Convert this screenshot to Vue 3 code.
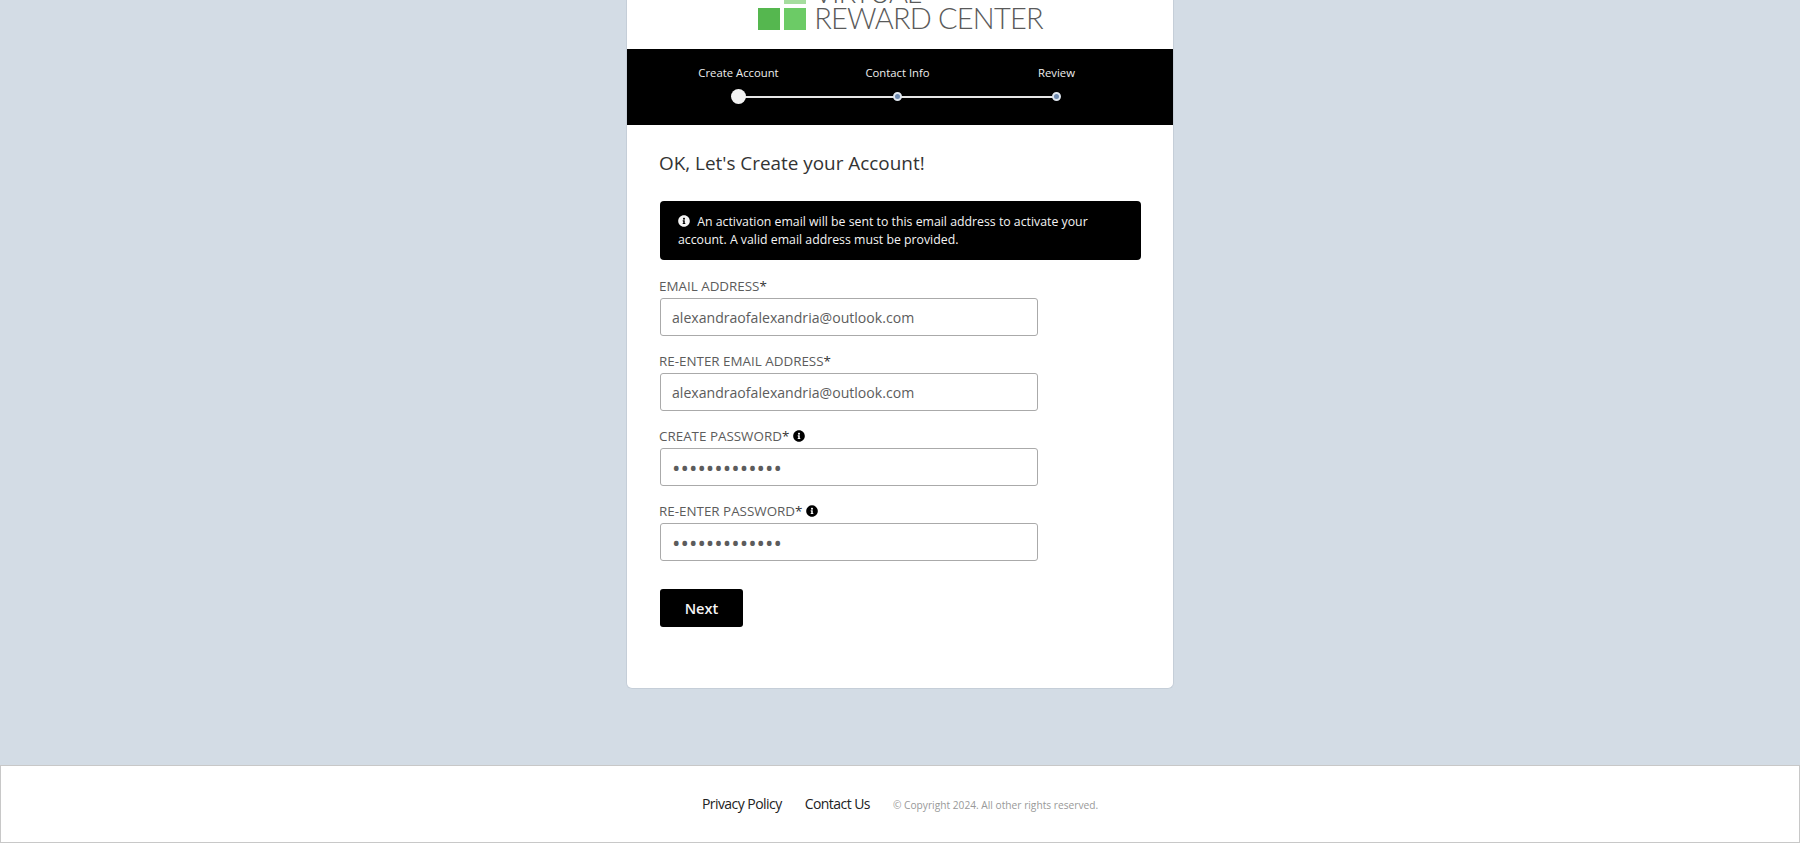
<script setup>
const steps = [
  { label: 'Create Account', active: true },
  { label: 'Contact Info', active: false },
  { label: 'Review', active: false }
]

const fields = [
  { label: 'EMAIL ADDRESS', type: 'text', value: 'alexandraofalexandria@outlook.com', info: false },
  { label: 'RE-ENTER EMAIL ADDRESS', type: 'text', value: 'alexandraofalexandria@outlook.com', info: false },
  { label: 'CREATE PASSWORD', type: 'password', value: 'Alexandria123', info: true },
  { label: 'RE-ENTER PASSWORD', type: 'password', value: 'Alexandria123', info: true }
]

const infoPath = 'M256 8C119.043 8 8 119.083 8 256c0 136.997 111.043 248 248 248s248-111.003 248-248C504 119.083 392.957 8 256 8zm0 110c23.196 0 42 18.804 42 42s-18.804 42-42 42-42-18.804-42-42 18.804-42 42-42zm56 254c0 6.627-5.373 12-12 12h-88c-6.627 0-12-5.373-12-12v-24c0-6.627 5.373-12 12-12h12v-64h-12c-6.627 0-12-5.373-12-12v-24c0-6.627 5.373-12 12-12h64c6.627 0 12 5.373 12 12v100h12c6.627 0 12 5.373 12 12v24z'
</script>

<template>
  <div class="page">
    <main class="card">
      <header class="logo-bar">
        <div class="logo">
          <div class="logo-mark">
            <span class="sq sq-top"></span>
            <span class="sq sq-dark"></span>
            <span class="sq sq-mid"></span>
          </div>
          <div class="logo-text">
            <span class="logo-line-top">VIRTUAL</span>
            <span>REWARD CENTER</span>
          </div>
        </div>
      </header>

      <nav class="stepper">
        <div v-for="step in steps" :key="step.label" class="step">
          <span class="step-label">{{ step.label }}</span>
          <span class="step-dot" :class="{ active: step.active }"></span>
        </div>
      </nav>

      <section class="content">
        <h1 class="title">OK, Let's Create your Account!</h1>

        <div class="alert">
          <svg class="alert-icon" viewBox="0 0 512 512"><path :d="infoPath" /></svg>
          An activation email will be sent to this email address to activate your account. A valid email address must be provided.
        </div>

        <form class="form" @submit.prevent>
          <div v-for="field in fields" :key="field.label" class="field">
            <label class="field-label">
              <span>{{ field.label }}<span class="req">*</span></span>
              <svg v-if="field.info" class="label-icon" viewBox="0 0 512 512"><path :d="infoPath" /></svg>
            </label>
            <input class="field-input" :type="field.type" :value="field.value" />
          </div>
          <button class="next" type="submit">Next</button>
        </form>
      </section>
    </main>

    <footer class="footer">
      <a class="footer-link">Privacy Policy</a>
      <a class="footer-link">Contact Us</a>
      <span class="copyright">© Copyright 2024. All other rights reserved.</span>
    </footer>
  </div>
</template>

<style>
html,
body {
  margin: 0;
  background: #d3dce5;
}
</style>

<style scoped>
.page {
  font-family: "Open Sans", "Liberation Sans", sans-serif;
  height: 843px;
  overflow: hidden;
  display: flex;
  flex-direction: column;
  align-items: center;
}

.card {
  width: 548px;
  height: 689px;
  box-sizing: border-box;
  background: #fff;
  border: 1px solid #c5ced8;
  border-top: 0;
  border-radius: 0 0 6px 6px;
  overflow: hidden;
}

.logo-bar {
  height: 49px;
  overflow: hidden;
  display: flex;
  justify-content: center;
  align-items: flex-end;
}

.logo {
  display: flex;
  align-items: flex-end;
  gap: 8px;
  margin-bottom: 18px;
  margin-left: 1px;
}

.logo-mark {
  width: 48px;
  margin-bottom: 1px;
  display: grid;
  grid-template-columns: 22px 22px;
  grid-template-rows: 22px 22px;
  gap: 4px;
  flex: none;
}

.sq-top {
  grid-column: 2;
  background: #a5dd9e;
}

.sq-dark {
  background: #55b74f;
}

.sq-mid {
  background: #6ccb66;
}

.logo-text {
  display: flex;
  flex-direction: column;
  justify-content: flex-end;
  font-family: "Lato", sans-serif;
  font-weight: 300;
  font-size: 29px;
  line-height: 26px;
  letter-spacing: -0.8px;
  color: #5a5a5a;
  white-space: nowrap;
}

.logo-line-top {
  letter-spacing: -1.2px;
}

.stepper {
  height: 76px;
  background: #000;
  display: flex;
  justify-content: center;
  padding-right: 5px;
}

.step {
  width: 159px;
  position: relative;
  display: flex;
  flex-direction: column;
  align-items: center;
  padding-top: 15px;
}

.step-label {
  color: #eee;
  font-size: 11.3px;
  line-height: 18px;
}

.step-dot {
  width: 9px;
  height: 9px;
  box-sizing: border-box;
  margin-top: 10px;
  border-radius: 50%;
  background: #6f8bb0;
  border: 2px solid #dfe6ee;
  position: relative;
  z-index: 1;
}

.step-dot.active {
  width: 15px;
  height: 15px;
  margin-top: 7px;
  background: #f2f2f2;
  border: 0;
}

.step:not(:last-child)::after {
  content: "";
  position: absolute;
  left: 50%;
  width: 100%;
  top: 47px;
  height: 2px;
  background: #e6e6e6;
}

.content {
  padding: 25px 32px 0 33px;
}

.title {
  margin: 0 0 0 -1px;
  font-size: 18.9px;
  font-weight: 400;
  line-height: 27px;
  color: #333;
}

.alert {
  margin-top: 24px;
  height: 59px;
  box-sizing: border-box;
  padding: 12px 18px;
  background: #000;
  color: #f4f4f4;
  border-radius: 4px;
  font-size: 12.3px;
  line-height: 18px;
}

.alert-icon {
  width: 12px;
  height: 12px;
  fill: #f4f4f4;
  margin-right: 4px;
  vertical-align: -1px;
}

.form {
  margin-top: 17px;
}

.field {
  width: 378px;
  height: 75px;
}

.field-label {
  display: flex;
  align-items: center;
  gap: 4px;
  height: 18px;
  margin-left: -1px;
  padding-bottom: 3px;
  color: #5c5c5c;
  font-size: 13.4px;
  line-height: 18px;
}

.req {
  color: #333;
}

.label-icon {
  width: 12px;
  height: 12px;
  fill: #000;
}

.field-input {
  display: block;
  width: 100%;
  height: 38px;
  box-sizing: border-box;
  padding: 0 11px;
  border: 1px solid #aaa;
  border-radius: 3px;
  background: #fff;
  color: #5c5c5c;
  font-family: inherit;
  font-size: 14.1px;
  outline: none;
}

.field-input[type="password"] {
  font-size: 22.5px;
}

.next {
  display: block;
  width: 83px;
  height: 38px;
  margin-top: 12px;
  background: #000;
  color: #f5f5f5;
  border: 0;
  border-radius: 3px;
  font-family: inherit;
  font-size: 14.6px;
  font-weight: 600;
}

.footer {
  margin-top: 76px;
  width: 100%;
  height: 78px;
  box-sizing: border-box;
  flex: none;
  background: #fff;
  border: 1px solid #c8c8c8;
  display: flex;
  justify-content: center;
  align-items: center;
  gap: 23px;
}

.footer-link {
  color: #222;
  font-size: 14px;
  letter-spacing: -0.55px;
  padding-bottom: 2px;
}

.copyright {
  color: #999;
  font-size: 10.2px;
  padding-top: 2px;
}
</style>
